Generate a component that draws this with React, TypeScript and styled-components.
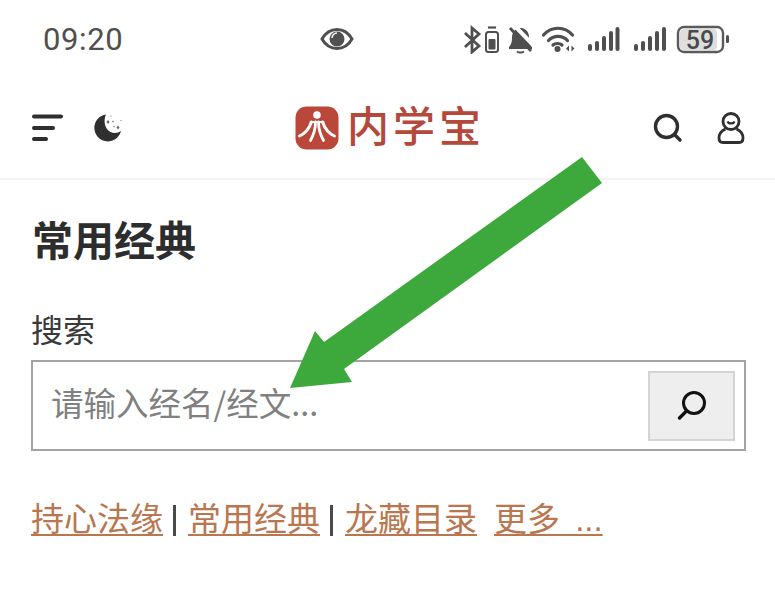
import React from "react";
import styled, { createGlobalStyle } from "styled-components";

const Global = createGlobalStyle`
  html, body { margin: 0; padding: 0; background: #fff; }
  body { font-family: "Roboto", "Noto Sans CJK SC", sans-serif; }
  #root { width: 775px; height: 600px; overflow: hidden; }
`;

const cjk = `"Liberation Sans", "Noto Sans CJK SC", sans-serif`;

const Page = styled.div`
  position: relative;
  width: 775px;
  height: 600px;
  background: #fff;
  overflow: hidden;
`;

const StatusBar = styled.div`
  height: 78px;
  display: grid;
  grid-template-columns: 1fr 1fr 1fr;
  align-items: center;
  padding: 0 46px 0 43px;
  box-sizing: border-box;
  color: #4f4f4f;
`;

const Clock = styled.div`
  font: 400 31px "Roboto", sans-serif;
  letter-spacing: 0.6px;
  line-height: 1;
`;

const EyeSlot = styled.div`
  display: flex;
  justify-content: center;
  margin-left: -43px;
`;

const StatusIcons = styled.div`
  display: flex;
  align-items: center;
  justify-content: flex-end;
`;

const Header = styled.header`
  height: 102px;
  display: grid;
  grid-template-columns: 1fr auto 1fr;
  align-items: center;
  padding: 0 30px 0 31px;
  border-bottom: 2px solid #f3f3f3;
  box-sizing: border-box;
`;

const HeaderLeft = styled.div`
  display: flex;
  align-items: center;
  gap: 30px;
`;

const HeaderRight = styled.div`
  display: flex;
  align-items: center;
  justify-content: flex-end;
  gap: 34px;
`;

const Logo = styled.div`
  display: flex;
  align-items: center;
  gap: 8px;
  margin-left: 4px;
`;

const LogoText = styled.span`
  font: 500 42px ${cjk};
  color: #b5483a;
  letter-spacing: 4px;
  line-height: 1;
`;

const Main = styled.main`
  padding: 0 29px 0 31px;
`;

const Title = styled.h1`
  margin: 38px 0 0 1px;
  font: 700 41px/48px ${cjk};
  color: #2d2d2d;
`;

const Label = styled.div`
  margin-top: 46px;
  font: 400 32px/38px ${cjk};
  color: #3a3a3a;
`;

const SearchBox = styled.div`
  margin-top: 10px;
  height: 91px;
  border: 2px solid #a3a3a3;
  box-sizing: border-box;
  display: flex;
  align-items: center;
  justify-content: space-between;
  padding: 0 9px 0 18px;
`;

const Placeholder = styled.span`
  font: 400 32.500px/40px "Noto Sans CJK SC", sans-serif;
  color: #808080;
  margin-top: -7px;
`;

const SearchButton = styled.div`
  width: 87px;
  height: 70px;
  background: #eeeeee;
  border: 2px solid #d4d4d4;
  box-sizing: border-box;
  display: flex;
  align-items: center;
  justify-content: center;
`;

const Links = styled.nav`
  margin-top: 47px;
  display: flex;
  align-items: center;
  font: 400 33px/44px ${cjk};
`;

const LinkItem = styled.a<{ $gap?: number }>`
  color: #b9764f;
  text-decoration: underline;
  text-decoration-thickness: 2px;
  text-underline-offset: 3px;
  white-space: pre;
  word-spacing: 6px;
  margin-left: ${(p) => p.$gap ?? 0}px;
`;

const Pipe = styled.span`
  width: 3px;
  height: 31px;
  background: #4a4a4a;
  margin: 0 12px 0 10px;
`;

const ArrowOverlay = styled.svg`
  position: absolute;
  left: 0;
  top: 0;
  pointer-events: none;
`;

const Eye = () => (
  <svg width="34" height="24" viewBox="0 0 34 24">
    <path d="M2 12C6 5 11 2.500 17 2.500S28 5 32 12c-4 7-9 9.500-15 9.500S6 19 2 12Z" fill="none" stroke="#505050" strokeWidth="3" />
    <circle cx="17" cy="12" r="7.500" fill="#505050" />
    <path d="M12 11a5 5 0 0 1 5-5" stroke="#fff" strokeWidth="1.500" fill="none" />
  </svg>
);

const Status = () => (
  <svg width="266" height="30" viewBox="0 0 266 30" style={{ marginRight: -1 }}>
    <g fill="none" stroke="#4f4f4f">
      <path d="M1 9 15 22 8 28V4l7 6L1 23" strokeWidth="2.800" />
      <path d="M24 3.500h8" strokeWidth="2.200" />
      <rect x="22" y="8" width="12" height="20" rx="2.500" strokeWidth="2" />
    </g>
    <rect x="24.500" y="15" width="7" height="10.500" rx="1" fill="#4f4f4f" />
    <path d="M56 4C50 5 48 9 48 14 48 18 47 21 45 23V25H68V23C66 21 65 18 65 13 65 8 62 5 58 4Z" fill="#4f4f4f" />
    <path d="M47 1 71 26" stroke="#fff" strokeWidth="4" fill="none" transform="translate(1.500 -1.500)" />
    <path d="M46 4 67 27" stroke="#4f4f4f" strokeWidth="2.800" fill="none" />
    <path d="M53 27.500a4.500 3 0 0 0 7 0" stroke="#4f4f4f" strokeWidth="2" fill="none" />
    <g fill="none" stroke="#4f4f4f" strokeWidth="3.200" strokeLinecap="round">
      <path d="M79.500 11c8-9 21-9 29 0" />
      <path d="M84.500 16.500c5-5.500 14-5.500 19 0" />
      <path d="M89 21c2-2 7-2 9 0" />
    </g>
    <circle cx="93.500" cy="25" r="3" fill="#4f4f4f" />
    <path d="M105 21.500v6l-3-3ZM107.500 21.500v6l3-3Z" fill="#4f4f4f" />
    <g fill="#4f4f4f">
      <rect x="124" y="20" width="4" height="7" rx="2" />
      <rect x="131" y="17" width="4" height="10" rx="2" />
      <rect x="138" y="12" width="4" height="15" rx="2" />
      <rect x="145" y="7" width="4" height="20" rx="2" />
      <rect x="151.500" y="3" width="4" height="24" rx="2" />
      <rect x="170" y="20" width="4" height="7" rx="2" />
      <rect x="177" y="17" width="4" height="10" rx="2" />
      <rect x="184" y="12" width="4" height="15" rx="2" />
      <rect x="191" y="7" width="4" height="20" rx="2" />
      <rect x="198" y="3" width="4" height="24" rx="2" />
    </g>
    <rect x="214" y="3" width="45" height="25" rx="6" fill="#fff" stroke="#5a5a5a" strokeWidth="2.400" />
    <rect x="216" y="5" width="37" height="21" rx="4" fill="#dedede" />
    <rect x="262" y="11" width="3" height="8" rx="1.500" fill="#4f4f4f" />
    <text x="236" y="25" textAnchor="middle" fontFamily="Roboto, sans-serif" fontWeight="500" fontSize="25" fill="#4a4a4a">59</text>
  </svg>
);

const Menu = () => (
  <svg width="32" height="30" viewBox="0 0 32 30">
    <g stroke="#2f2f2f" strokeWidth="4" strokeLinecap="round">
      <path d="M3 3.500h27" />
      <path d="M3 15h19" />
      <path d="M3 26h12" />
    </g>
  </svg>
);

const Moon = () => (
  <svg width="30" height="30" viewBox="0 0 30 30">
    <path d="M13 1.500A13.500 13.500 0 1 0 28 18C24 21 17 20.500 14 16 11 11.500 11 5.500 13 1.500Z" fill="#2f2f2f" />
    <g fill="#666">
      <path d="M15 7l1.500 2L15 11l-1.500-2Z" />
      <path d="M25 12.500l1.500 2-1.500 2-1.500-2Z" />
      <circle cx="20" cy="8.500" r="0.800" />
      <circle cx="18" cy="3" r="0.600" />
      <circle cx="28" cy="7.500" r="0.600" />
      <circle cx="21" cy="13.500" r="0.700" />
    </g>
  </svg>
);

const LogoMark = () => (
  <svg width="44" height="44" viewBox="0 0 44 44">
    <rect x="0.500" y="0.500" width="43" height="43" rx="11" fill="#b9483a" />
    <g fill="none" stroke="#fff" strokeLinecap="round">
      <circle cx="22" cy="9" r="3.800" fill="#fff" stroke="none" />
      <path d="M15.500 16H28.500" strokeWidth="2" />
      <path d="M16.500 16C14 23 9 28 4.500 30" strokeWidth="3" />
      <path d="M27.500 16C30 23 35 28 39.500 30" strokeWidth="3" />
      <path d="M20.500 16C20.500 24 18 30 15.500 34.500" strokeWidth="2.800" />
      <path d="M23.500 16C23.500 24 26 30 28.500 34.500" strokeWidth="2.800" />
    </g>
  </svg>
);

const HeadSearch = () => (
  <svg width="30" height="30" viewBox="0 0 30 30">
    <circle cx="13.500" cy="13.500" r="11" fill="none" stroke="#2f2f2f" strokeWidth="3.400" />
    <path d="M22 22l5 5" stroke="#2f2f2f" strokeWidth="3.400" strokeLinecap="round" />
  </svg>
);

const User = () => (
  <svg width="28" height="32" viewBox="0 0 28 32">
    <circle cx="14" cy="9.500" r="8" fill="none" stroke="#2f2f2f" strokeWidth="2.800" />
    <path d="M10.500 9.500c1 2.500 6 2.500 7 0" fill="none" stroke="#2f2f2f" strokeWidth="2.200" />
    <path d="M8.500 17C4 19 2 22 2 26c0 3 1.500 4.500 4 4.500h16c2.500 0 4-1.500 4-4.500 0-4-2-7-6.500-9" fill="none" stroke="#2f2f2f" strokeWidth="2.800" />
  </svg>
);

const ButtonSearch = () => (
  <svg width="32" height="32" viewBox="0 0 32 32">
    <circle cx="18" cy="13" r="10.500" fill="none" stroke="#111" strokeWidth="3" />
    <path d="M10.500 21 3.500 28" stroke="#111" strokeWidth="3.400" strokeLinecap="round" />
  </svg>
);

export default function App() {
  return (
    <Page>
      <Global />
      <StatusBar>
        <Clock>09:20</Clock>
        <EyeSlot>
          <Eye />
        </EyeSlot>
        <StatusIcons>
          <Status />
        </StatusIcons>
      </StatusBar>
      <Header>
        <HeaderLeft>
          <Menu />
          <Moon />
        </HeaderLeft>
        <Logo>
          <LogoMark />
          <LogoText>内学宝</LogoText>
        </Logo>
        <HeaderRight>
          <HeadSearch />
          <User />
        </HeaderRight>
      </Header>
      <Main>
        <Title>常用经典</Title>
        <Label>搜索</Label>
        <SearchBox>
          <Placeholder>请输入经名/经文...</Placeholder>
          <SearchButton>
            <ButtonSearch />
          </SearchButton>
        </SearchBox>
        <Links>
          <LinkItem>持心法缘</LinkItem>
          <Pipe />
          <LinkItem>常用经典</LinkItem>
          <Pipe />
          <LinkItem>龙藏目录</LinkItem>
          <LinkItem $gap={17}>更多 ...</LinkItem>
        </Links>
      </Main>
      <ArrowOverlay width="775" height="600" viewBox="0 0 775 600">
        <polygon points="582,157 602,183 344,369 352,382 290,388 315,331 324,342" fill="#3da83c" />
      </ArrowOverlay>
    </Page>
  );
}
